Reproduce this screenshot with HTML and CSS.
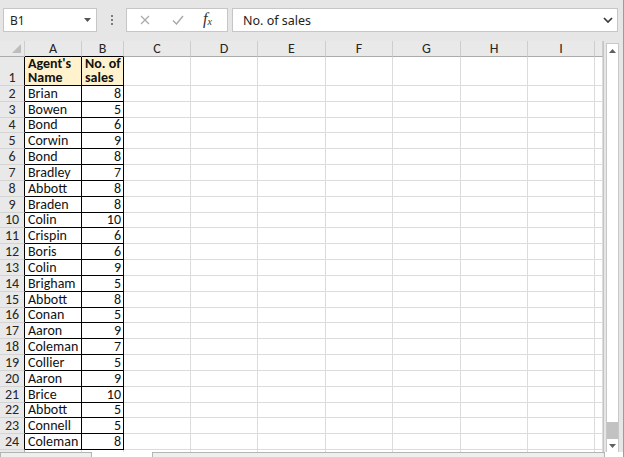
FILE: index.html
```html
<!DOCTYPE html>
<html lang="en">
<head>
  <meta charset="UTF-8">
  <title>Sales by agent</title>
  <link rel="stylesheet" href="styles.css">
</head>
<body>
<div class="window">
  <div class="formula-row">
    <div class="name-box">
      <span>B1</span>
      <svg class="caret" width="7" height="4" viewBox="0 0 7 4"><path d="M0 0h7L3.5 4z" fill="#555"/></svg>
    </div>
    <div class="grip"><i></i><i></i><i></i></div>
    <div class="fx-buttons">
      <svg class="ico-x" width="10" height="10" viewBox="0 0 10 10"><path d="M1 1l8 8M9 1l-8 8" stroke="#a9a9a9" stroke-width="1.2" fill="none"/></svg>
      <svg class="ico-ok" width="12" height="10" viewBox="0 0 12 10"><path d="M1 5.5l3.5 3.5L11 1" stroke="#a9a9a9" stroke-width="1.4" fill="none"/></svg>
      <span class="fx">f<sub>x</sub></span>
    </div>
    <div class="formula-input">
      <span>No. of sales</span>
      <svg class="chevron" width="10" height="6" viewBox="0 0 10 6"><path d="M1 1l4 4 4-4" stroke="#3a3a3a" stroke-width="1.7" fill="none"/></svg>
    </div>
  </div>

  <div class="sheet">
    <div class="cells">
      <table class="grid">
        <colgroup>
          <col style="width:25px"><col style="width:57px"><col style="width:42px">
          <col style="width:67px"><col style="width:67px"><col style="width:68px">
          <col style="width:67px"><col style="width:68px"><col style="width:67px">
          <col style="width:67px"><col style="width:8px">
        </colgroup>
        <tr class="hdr">
          <th class="corner"><svg width="9" height="9" viewBox="0 0 9 9"><path d="M9 0v9H0z" fill="#bdbdbd"/></svg></th>
          <th class="on">A</th><th class="on">B</th><th>C</th><th>D</th><th>E</th><th>F</th><th>G</th><th>H</th><th>I</th><th></th>
        </tr>
        <tr class="r1">
          <th class="rh in">1</th><td class="a ttl">Agent's<br>Name</td><td class="b ttl">No. of<br>sales</td>
          <td></td><td></td><td></td><td></td><td></td><td></td><td></td><td></td>
        </tr>
        <tr class="r"><th class="rh in">2</th><td class="a">Brian</td><td class="b">8</td><td></td><td></td><td></td><td></td><td></td><td></td><td></td><td></td></tr>
        <tr class="r"><th class="rh in">3</th><td class="a">Bowen</td><td class="b">5</td><td></td><td></td><td></td><td></td><td></td><td></td><td></td><td></td></tr>
        <tr class="r"><th class="rh in">4</th><td class="a">Bond</td><td class="b">6</td><td></td><td></td><td></td><td></td><td></td><td></td><td></td><td></td></tr>
        <tr class="r"><th class="rh in">5</th><td class="a">Corwin</td><td class="b">9</td><td></td><td></td><td></td><td></td><td></td><td></td><td></td><td></td></tr>
        <tr class="r"><th class="rh in">6</th><td class="a">Bond</td><td class="b">8</td><td></td><td></td><td></td><td></td><td></td><td></td><td></td><td></td></tr>
        <tr class="r"><th class="rh in">7</th><td class="a">Bradley</td><td class="b">7</td><td></td><td></td><td></td><td></td><td></td><td></td><td></td><td></td></tr>
        <tr class="r"><th class="rh in">8</th><td class="a">Abbott</td><td class="b">8</td><td></td><td></td><td></td><td></td><td></td><td></td><td></td><td></td></tr>
        <tr class="r"><th class="rh in">9</th><td class="a">Braden</td><td class="b">8</td><td></td><td></td><td></td><td></td><td></td><td></td><td></td><td></td></tr>
        <tr class="r"><th class="rh in">10</th><td class="a">Colin</td><td class="b">10</td><td></td><td></td><td></td><td></td><td></td><td></td><td></td><td></td></tr>
        <tr class="r"><th class="rh in">11</th><td class="a">Crispin</td><td class="b">6</td><td></td><td></td><td></td><td></td><td></td><td></td><td></td><td></td></tr>
        <tr class="r"><th class="rh in">12</th><td class="a">Boris</td><td class="b">6</td><td></td><td></td><td></td><td></td><td></td><td></td><td></td><td></td></tr>
        <tr class="r"><th class="rh in">13</th><td class="a">Colin</td><td class="b">9</td><td></td><td></td><td></td><td></td><td></td><td></td><td></td><td></td></tr>
        <tr class="r"><th class="rh in">14</th><td class="a">Brigham</td><td class="b">5</td><td></td><td></td><td></td><td></td><td></td><td></td><td></td><td></td></tr>
        <tr class="r"><th class="rh in">15</th><td class="a">Abbott</td><td class="b">8</td><td></td><td></td><td></td><td></td><td></td><td></td><td></td><td></td></tr>
        <tr class="r"><th class="rh in">16</th><td class="a">Conan</td><td class="b">5</td><td></td><td></td><td></td><td></td><td></td><td></td><td></td><td></td></tr>
        <tr class="r"><th class="rh in">17</th><td class="a">Aaron</td><td class="b">9</td><td></td><td></td><td></td><td></td><td></td><td></td><td></td><td></td></tr>
        <tr class="r"><th class="rh in">18</th><td class="a">Coleman</td><td class="b">7</td><td></td><td></td><td></td><td></td><td></td><td></td><td></td><td></td></tr>
        <tr class="r"><th class="rh in">19</th><td class="a">Collier</td><td class="b">5</td><td></td><td></td><td></td><td></td><td></td><td></td><td></td><td></td></tr>
        <tr class="r"><th class="rh in">20</th><td class="a">Aaron</td><td class="b">9</td><td></td><td></td><td></td><td></td><td></td><td></td><td></td><td></td></tr>
        <tr class="r"><th class="rh in">21</th><td class="a">Brice</td><td class="b">10</td><td></td><td></td><td></td><td></td><td></td><td></td><td></td><td></td></tr>
        <tr class="r"><th class="rh in">22</th><td class="a">Abbott</td><td class="b">5</td><td></td><td></td><td></td><td></td><td></td><td></td><td></td><td></td></tr>
        <tr class="r"><th class="rh in">23</th><td class="a">Connell</td><td class="b">5</td><td></td><td></td><td></td><td></td><td></td><td></td><td></td><td></td></tr>
        <tr class="r"><th class="rh in">24</th><td class="a">Coleman</td><td class="b">8</td><td></td><td></td><td></td><td></td><td></td><td></td><td></td><td></td></tr>
        <tr class="r"><th class="rh"></th><td></td><td></td><td></td><td></td><td></td><td></td><td></td><td></td><td></td><td></td></tr>
      </table>
    </div>
    <div class="vscroll">
      <div class="sb">
        <div class="sb-btn"><svg width="7" height="4" viewBox="0 0 7 4"><path d="M0 4h7L3.5 0z" fill="#606060"/></svg></div>
        <div class="sb-track"><div class="sb-thumb"></div></div>
        <div class="sb-btn"><svg width="7" height="4" viewBox="0 0 7 4"><path d="M0 0h7L3.5 4z" fill="#606060"/></svg></div>
      </div>
    </div>
  </div>

  <div class="status">
    <div class="tab-nav"></div>
    <div class="tab-gap"></div>
    <div class="hscroll"></div>
  </div>
</div>
</body>
</html>
```

FILE: styles.css
```css
* {
  box-sizing: border-box;
}
body {
  margin: 0;
  background: #e6e6e6;
  font-family: Carlito, Lato, "Liberation Sans", sans-serif;
}
.window {
  width: 624px;
  height: 457px;
  overflow: hidden;
  display: flex;
  flex-direction: column;
  background: #e6e6e6;
  border-right: 1px solid #9c9c9c;
}

/* formula bar */
.formula-row {
  height: 41px;
  flex: none;
  display: flex;
  align-items: flex-start;
  padding: 8px 0 0 3px;
  font-family: "Noto Sans", "Open Sans", sans-serif;
  font-size: 12px;
  color: #222;
}
.name-box {
  width: 94px;
  height: 24px;
  background: #fff;
  border: 1px solid #c6c6c6;
  display: flex;
  align-items: center;
  justify-content: space-between;
  padding: 0 5px 0 6px;
}
.grip {
  width: 29px;
  height: 24px;
  display: flex;
  flex-direction: column;
  align-items: center;
  justify-content: center;
  gap: 2px;
}
.grip i {
  width: 2px;
  height: 2px;
  background: #7c7c7c;
}
.fx-buttons {
  width: 102px;
  height: 24px;
  background: #fff;
  border: 1px solid #c6c6c6;
  display: flex;
  align-items: center;
  padding-left: 13px;
}
.ico-ok {
  margin-left: 22px;
}
.fx {
  margin-left: 19px;
  font-family: "Liberation Serif", serif;
  font-style: italic;
  font-size: 16px;
  line-height: 16px;
  color: #333;
}
.fx sub {
  font-size: 10px;
  vertical-align: -1px;
}
.formula-input {
  width: 386px;
  height: 24px;
  margin-left: 4px;
  background: #fff;
  border: 1px solid #c6c6c6;
  display: flex;
  align-items: center;
  justify-content: space-between;
  padding: 0 4px 0 10px;
  font-size: 12.5px;
}

/* sheet */
.sheet {
  height: 411px;
  flex: none;
  display: flex;
}
.cells {
  width: 604px;
  background: #fff;
  border-right: 1px solid #c4c4c4;
  overflow: hidden;
}
.grid {
  width: 603px;
  table-layout: fixed;
  border-collapse: separate;
  border-spacing: 0;
  font-size: 14px;
  color: #111;
}
.grid td,
.grid th {
  border-right: 1px solid #dcdcdc;
  border-bottom: 1px solid #dcdcdc;
  padding: 0 2px 0 3px;
  line-height: 14px;
  vertical-align: bottom;
  white-space: nowrap;
  overflow: hidden;
}
.grid th {
  background: #e9e9e9;
  font-weight: normal;
  color: #262626;
  text-align: center;
  padding: 0;
}
.hdr th {
  height: 16px;
  border-right-color: #cdcdcd;
  border-bottom-color: #ababab;
  vertical-align: middle;
}
.hdr th.on {
  border-bottom-color: #000;
}
.corner {
  text-align: right !important;
  vertical-align: bottom !important;
}
.corner svg {
  display: block;
  margin: 0 3px 3px auto;
}
.rh {
  border-right-color: #ababab !important;
  border-bottom-color: #d4d4d4 !important;
}
.rh.in {
  border-right-color: #000 !important;
}
.r1 td,
.r1 th {
  height: 29px;
}
.r td,
.r th {
  height: 15.83px;
}
.grid .a,
.grid .b {
  border-right-color: #000;
  border-bottom-color: #000;
}
.grid .b {
  text-align: right;
}
.grid .ttl {
  background: #fff2cc;
  font-weight: bold;
  text-align: left;
  white-space: normal;
  line-height: 14px;
  overflow: visible;
}

/* scroll bar */
.vscroll {
  width: 17px;
  padding: 2px 2px 0 2px;
}
.sb {
  height: 100%;
  background: #fff;
  border: 1px solid #c8c8c8;
  border-bottom: none;
  display: flex;
  flex-direction: column;
}
.sb-btn {
  height: 13px;
  flex: none;
  display: flex;
  align-items: center;
  justify-content: center;
}
.sb-track {
  flex: 1;
  display: flex;
  flex-direction: column;
  justify-content: flex-end;
}
.sb-thumb {
  height: 17px;
  background: #c2c2c2;
}

/* bottom strip */
.status {
  height: 5px;
  flex: none;
  display: flex;
  background: #fff;
}
.tab-nav {
  width: 92px;
  background: #efefef;
  border: 1px solid #b4b4b4;
  border-bottom: none;
}
.tab-gap {
  width: 60px;
}
.hscroll {
  width: 453px;
  background: #efefef;
  border: 1px solid #b4b4b4;
  border-bottom: none;
}
```
